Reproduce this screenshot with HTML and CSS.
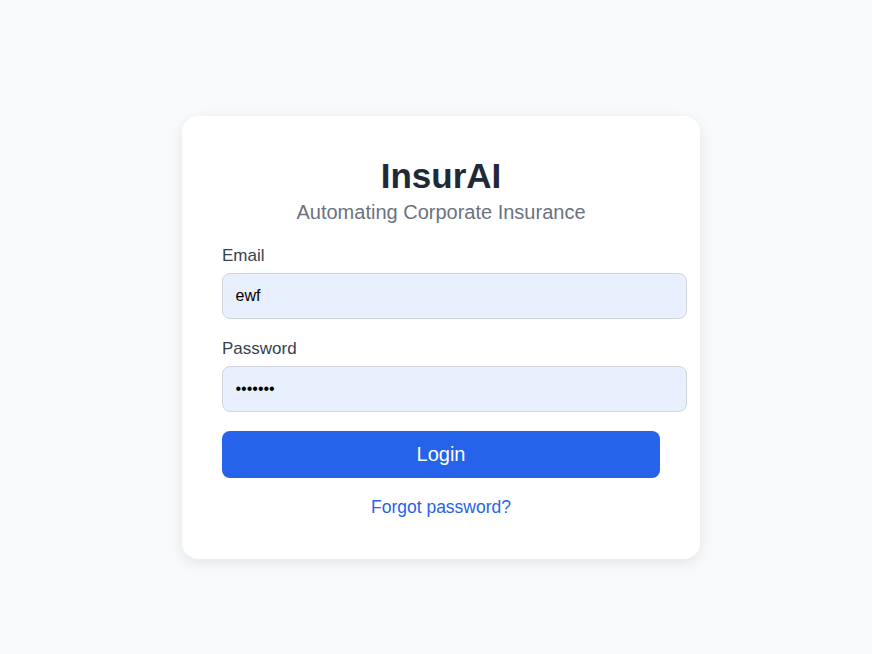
FILE: index.html
```html
<!DOCTYPE html>
<html lang="en">
<head>
<meta charset="utf-8">
<title>InsurAI Login</title>
<link rel="stylesheet" href="styles.css">
</head>
<body>
<main class="page">
  <form class="card">
    <h1 class="title">InsurAI</h1>
    <p class="subtitle">Automating Corporate Insurance</p>
    <div class="field">
      <label class="label" for="email">Email</label>
      <input class="input" id="email" type="text" value="ewf">
    </div>
    <div class="field field-last">
      <label class="label" for="password">Password</label>
      <input class="input" id="password" type="password" value="1234567">
    </div>
    <button class="btn" type="button">Login</button>
    <a class="link" href="#">Forgot password?</a>
  </form>
</main>
</body>
</html>
```

FILE: styles.css
```css
* { box-sizing: border-box; }

html, body {
  margin: 0;
  padding: 0;
  background: #f8f9fb;
  font-family: "Liberation Sans", Arial, sans-serif;
}

.page {
  min-height: 654px;
  display: flex;
  align-items: center;
  justify-content: center;
  padding: 21px 0 0 10px;
}

.card {
  width: 518px;
  height: 443px;
  background: #ffffff;
  border-radius: 16px;
  box-shadow: 0 4px 14px rgba(0, 0, 0, 0.08);
  padding: 40px 40px 0;
  display: flex;
  flex-direction: column;
}

.title {
  margin: 0;
  font-size: 35px;
  line-height: 40px;
  font-weight: 700;
  color: #1f2937;
  text-align: center;
}

.subtitle {
  margin: 2px 0 20px;
  font-size: 20px;
  line-height: 28px;
  color: #6b7280;
  text-align: center;
}

.field {
  display: flex;
  flex-direction: column;
  margin-bottom: 20px;
}

.field-last {
  margin-bottom: 19px;
}

.label {
  font-size: 17px;
  line-height: 20px;
  color: #374151;
  margin-bottom: 7px;
}

.input {
  box-sizing: content-box;
  width: 100%;
  padding: 13px 12.5px;
  font-family: "Liberation Sans", Arial, sans-serif;
  font-size: 16px;
  line-height: 18px;
  color: #000000;
  background: #e8f0fe;
  border: 1px solid #d1d5db;
  border-radius: 8px;
  outline: none;
}

.btn {
  height: 47px;
  width: 100%;
  border: none;
  border-radius: 8px;
  background: #2563eb;
  color: #ffffff;
  font-family: "Liberation Sans", Arial, sans-serif;
  font-size: 20px;
  cursor: pointer;
  margin-bottom: 19px;
}

.link {
  align-self: center;
  font-size: 17.5px;
  line-height: 20px;
  color: #2563eb;
  text-decoration: none;
}
```
